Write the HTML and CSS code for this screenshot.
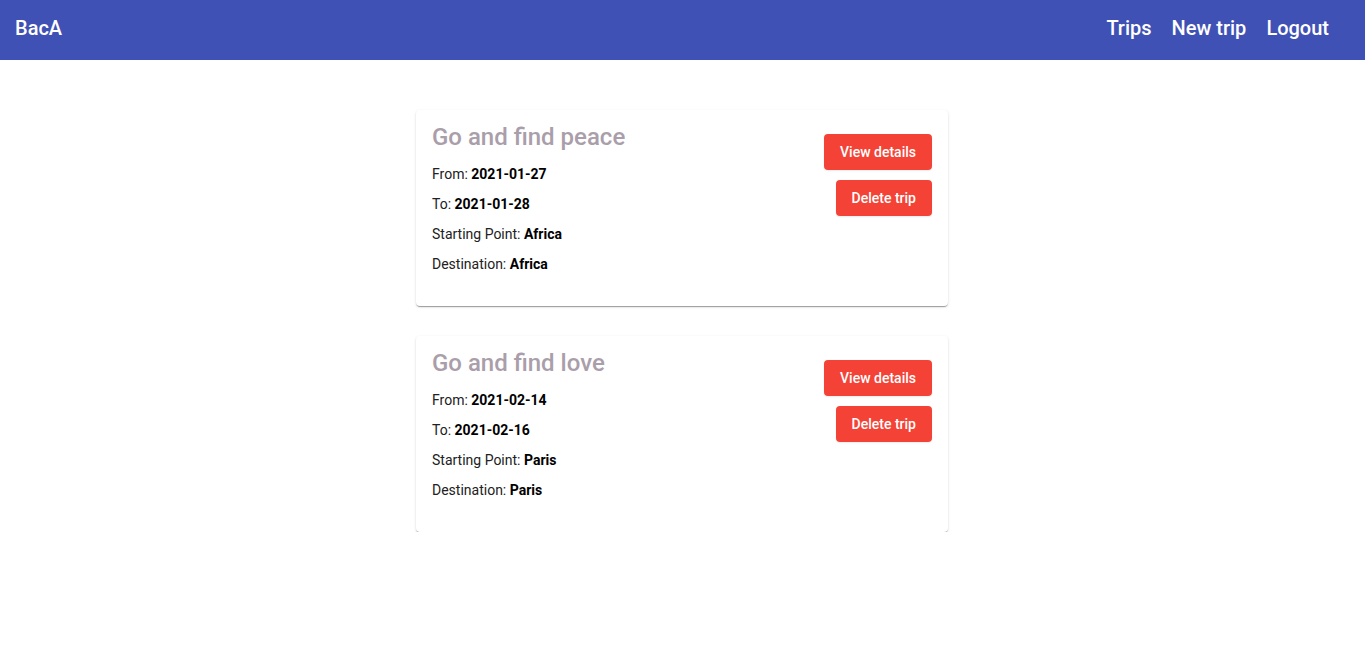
FILE: index.html
```html
<!DOCTYPE html>
<html>
<head>
<meta charset="utf-8">
<link rel="stylesheet" href="styles.css">
</head>
<body>
<header class="topbar">
  <a class="brand" href="#">BacA</a>
  <nav class="nav">
    <a href="#">Trips</a>
    <a href="#">New trip</a>
    <a href="#">Logout</a>
  </nav>
</header>
<main class="list">
  <section class="card">
    <div class="info">
      <h2 class="title">Go and find peace</h2>
      <div class="rows">
        <p>From: <b>2021-01-27</b></p>
        <p>To: <b>2021-01-28</b></p>
        <p>Starting Point: <b>Africa</b></p>
        <p>Destination: <b>Africa</b></p>
      </div>
    </div>
    <div class="actions">
      <button class="btn">View details</button>
      <button class="btn">Delete trip</button>
    </div>
  </section>
  <section class="card">
    <div class="info">
      <h2 class="title">Go and find love</h2>
      <div class="rows">
        <p>From: <b>2021-02-14</b></p>
        <p>To: <b>2021-02-16</b></p>
        <p>Starting Point: <b>Paris</b></p>
        <p>Destination: <b>Paris</b></p>
      </div>
    </div>
    <div class="actions">
      <button class="btn">View details</button>
      <button class="btn">Delete trip</button>
    </div>
  </section>
</main>
</body>
</html>
```
FILE: styles.css
```css
html, body {
  margin: 0;
  padding: 0;
  background: #fff;
  font-family: Roboto, "Liberation Sans", sans-serif;
  color: #212121;
}
.topbar {
  height: 60px;
  background: #3f51b5;
  display: flex;
  align-items: center;
  justify-content: space-between;
  padding: 0 36px 4px 15px;
  box-sizing: border-box;
}
.topbar a {
  color: #fff;
  text-decoration: none;
  font-size: 20px;
  font-weight: 500;
}
.nav {
  display: flex;
  gap: 20px;
}
.list {
  display: flex;
  flex-direction: column;
  align-items: center;
  gap: 30px;
  padding: 50px 1px 0 0;
}
.card {
  width: 532px;
  box-sizing: border-box;
  padding: 13px 16px 32px 16px;
  border-radius: 4px;
  background: #fff;
  box-shadow: 0 2px 1px -1px rgba(0,0,0,.22), 0 1px 1px 0 rgba(0,0,0,.15), 0 1px 3px 0 rgba(0,0,0,.12);
  display: flex;
  justify-content: space-between;
  align-items: flex-start;
}
.title {
  margin: 0;
  font-size: 24px;
  line-height: 28px;
  font-weight: 500;
  color: #a99ea9;
}
.rows {
  margin-top: 13px;
  display: flex;
  flex-direction: column;
  gap: 10px;
}
.rows p {
  margin: 0;
  font-size: 14px;
  line-height: 20px;
  color: #212121;
}
.rows b {
  font-weight: 700;
  color: #000;
}
.actions {
  margin-top: 11px;
  display: flex;
  flex-direction: column;
  align-items: flex-end;
  gap: 10px;
}
.btn {
  height: 36px;
  padding: 0 16px;
  border: none;
  border-radius: 4px;
  background: #f44336;
  color: #fff;
  font-family: Roboto, "Liberation Sans", sans-serif;
  font-size: 14px;
  font-weight: 500;
  box-shadow: 0 1px 2px rgba(0,0,0,.08);
}
```
